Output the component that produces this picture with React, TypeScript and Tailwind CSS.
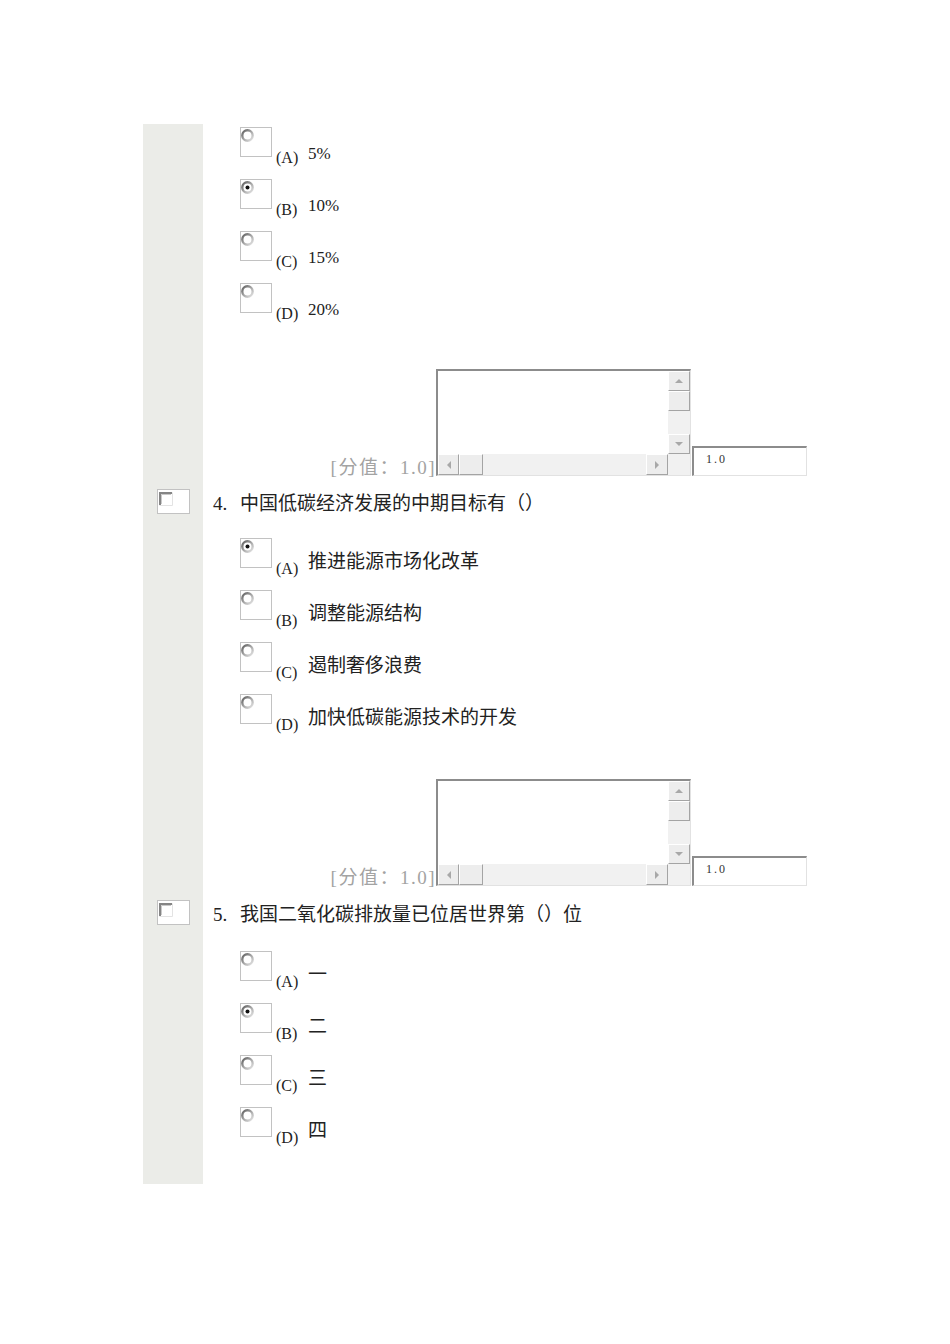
import React from "react";

type Option = { label: string; text: string; checked?: boolean };

const FONT = "font-['Liberation_Serif','Noto_Sans_CJK_SC',serif]";

const Radio = ({ checked }: { checked?: boolean }) => (
  <svg width="13" height="13" viewBox="0 0 13 13" className="mt-[1px]">
    <defs>
      <linearGradient id="ring" x1="0" y1="0" x2="1" y2="1">
        <stop offset="0" stopColor="#5f5f5f" />
        <stop offset="0.5" stopColor="#a6a6a6" />
        <stop offset="1" stopColor="#e6e6e6" />
      </linearGradient>
    </defs>
    <circle cx="6.5" cy="6.5" r="5.2" fill="#ffffff" stroke="url(#ring)" strokeWidth="2.4" />
    {checked && <circle cx="6.5" cy="6.5" r="2" fill="#111111" />}
  </svg>
);

const CheckGlyph = () => (
  <svg width="14" height="14" viewBox="0 0 14 14" className="ml-[1px] mt-[2px]">
    <rect x="0" y="0" width="14" height="14" fill="#ffffff" />
    <path d="M1 13 V1 H13" fill="none" stroke="#858585" strokeWidth="2" />
    <path d="M2.5 12 V2.5 H12" fill="none" stroke="#c9c9c9" strokeWidth="1" />
    <path d="M0.5 13.5 H13.5 V0.5" fill="none" stroke="#e3e3e3" strokeWidth="1" />
  </svg>
);

const OptionRow = ({ opt, latin }: { opt: Option; latin?: boolean }) => (
  <div className="flex h-[52px] items-start">
    <div className="h-[30px] w-[32px] border border-[#c2c2c2] bg-white">
      <Radio checked={opt.checked} />
    </div>
    <span className="ml-[4px] mt-[22px] w-[23px] text-[16px] leading-[17px] text-[#222]">
      ({opt.label})
    </span>
    <span
      className={
        latin
          ? "ml-[9px] mt-[17px] text-[17px] leading-[20px] text-[#222]"
          : "ml-[9px] mt-[14px] text-[19px] leading-[20px] text-[#222]"
      }
    >
      {opt.text}
    </span>
  </div>
);

const ArrowBtn = ({ dir, className }: { dir: "up" | "down" | "left" | "right"; className: string }) => {
  const pts = {
    up: "0,4 4,0 8,4",
    down: "0,0 8,0 4,4",
    left: "4,0 4,8 0,4",
    right: "0,0 4,4 0,8",
  }[dir];
  const vertical = dir === "up" || dir === "down";
  return (
    <div
      className={`flex items-center justify-center border border-b-[#a4a4a4] border-l-white border-r-[#a4a4a4] border-t-white bg-[#ededed] ${className}`}
    >
      <svg width={vertical ? 8 : 4} height={vertical ? 4 : 8}>
        <polygon points={pts} fill="#a8a8a8" />
      </svg>
    </div>
  );
};

const ScoreBlock = () => (
  <div className="flex items-end pl-[125px]">
    <span className="w-[108px] translate-y-[3px] text-right text-[19px] leading-[22px] tracking-[1.5px] text-[#a3a3a3]">
      [分值：1.0]
    </span>
    <div className="flex h-[107px] w-[255px] flex-col border-b border-l-2 border-r border-t-2 border-b-[#e2e2e2] border-l-[#8c8c8c] border-r-[#e2e2e2] border-t-[#8c8c8c] bg-white">
      <div className="flex flex-1">
        <div className="flex-1 bg-white" />
        <div className="flex w-[22px] flex-col bg-[#f1f1f1]">
          <ArrowBtn dir="up" className="h-[20px]" />
          <div className="h-[20px] border border-b-[#a4a4a4] border-l-white border-r-[#a4a4a4] border-t-white bg-[#ededed]" />
          <div className="flex-1" />
          <ArrowBtn dir="down" className="h-[20px]" />
        </div>
      </div>
      <div className="flex h-[21px] bg-[#f1f1f1]">
        <ArrowBtn dir="left" className="w-[21px]" />
        <div className="w-[24px] border border-b-[#a4a4a4] border-l-white border-r-[#a4a4a4] border-t-white bg-[#ededed]" />
        <div className="flex-1" />
        <ArrowBtn dir="right" className="w-[22px]" />
        <div className="w-[22px] bg-[#f1f1f1]" />
      </div>
    </div>
    <div className="ml-[1px] flex h-[30px] w-[115px] items-start border-b border-l-2 border-r border-t-2 border-b-[#e2e2e2] border-l-[#8c8c8c] border-r-[#e2e2e2] border-t-[#8c8c8c] bg-white pl-[12px] pt-[4px]">
      <span className="text-[12px] leading-[14px] tracking-[2px] text-[#333]">1.0</span>
    </div>
  </div>
);

const Header = ({ num, text }: { num: string; text: string }) => (
  <div className="flex h-[25px] items-center pl-[10px]">
    <span className="mt-[5px] w-[27px] text-[19px] leading-[20px] text-[#222]">{num}.</span>
    <span className="mt-[5px] text-[19px] leading-[20px] text-[#222]">{text}</span>
  </div>
);

const q3: Option[] = [
  { label: "A", text: "5%" },
  { label: "B", text: "10%", checked: true },
  { label: "C", text: "15%" },
  { label: "D", text: "20%" },
];

const q4: Option[] = [
  { label: "A", text: "推进能源市场化改革", checked: true },
  { label: "B", text: "调整能源结构" },
  { label: "C", text: "遏制奢侈浪费" },
  { label: "D", text: "加快低碳能源技术的开发" },
];

const q5: Option[] = [
  { label: "A", text: "一" },
  { label: "B", text: "二", checked: true },
  { label: "C", text: "三" },
  { label: "D", text: "四" },
];

const Row = ({ check, children }: { check?: boolean; children: React.ReactNode }) => (
  <div className="flex">
    <div className="w-[60px] shrink-0 bg-[#ebece8]">
      {check && (
        <div className="ml-[14px] h-[25px] w-[33px] border border-[#c2c2c2] bg-white">
          <CheckGlyph />
        </div>
      )}
    </div>
    <div className="flex-1">{children}</div>
  </div>
);

export default function App() {
  return (
    <div className={`min-h-[1344px] w-[950px] bg-white pl-[143px] pt-[124px] ${FONT}`}>
      <div className="w-[665px]">
        <Row>
          <div className="pb-[13px] pt-[3px]">
            <div className="pl-[37px]">
              {q3.map((o) => (
                <OptionRow key={o.label} opt={o} latin />
              ))}
            </div>
            <div className="mt-[34px]">
              <ScoreBlock />
            </div>
          </div>
        </Row>
        <Row check>
          <div className="pb-[14px]">
            <Header num="4" text="中国低碳经济发展的中期目标有（）" />
            <div className="mt-[24px] pl-[37px]">
              {q4.map((o) => (
                <OptionRow key={o.label} opt={o} />
              ))}
            </div>
            <div className="mt-[33px]">
              <ScoreBlock />
            </div>
          </div>
        </Row>
        <Row check>
          <div className="pb-[25px]">
            <Header num="5" text="我国二氧化碳排放量已位居世界第（）位" />
            <div className="mt-[26px] pl-[37px]">
              {q5.map((o) => (
                <OptionRow key={o.label} opt={o} />
              ))}
            </div>
          </div>
        </Row>
      </div>
    </div>
  );
}
